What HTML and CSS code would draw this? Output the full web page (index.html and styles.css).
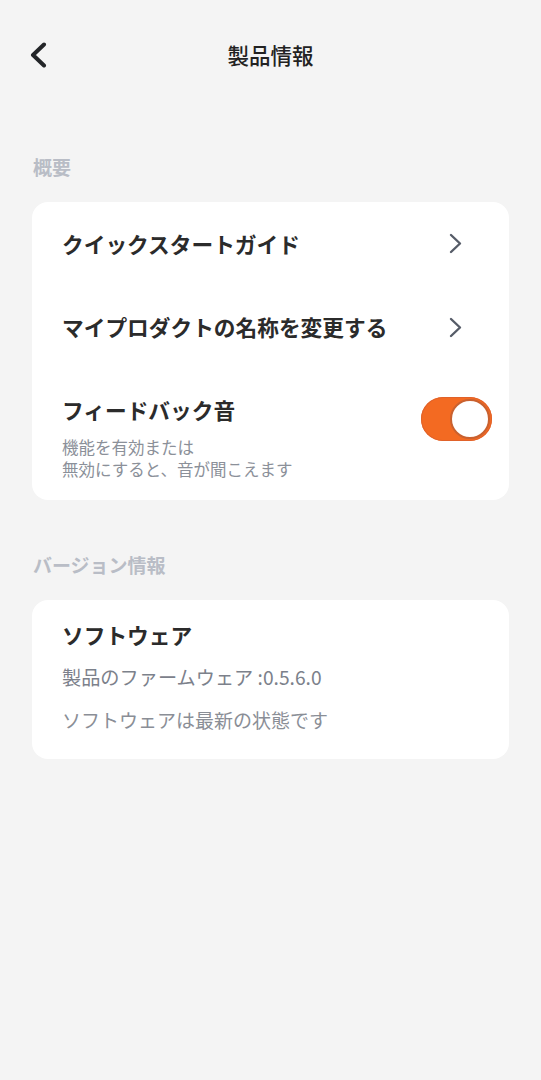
FILE: index.html
```html
<!DOCTYPE html>
<html lang="ja">
<head>
<meta charset="utf-8">
<title>製品情報</title>
<link rel="stylesheet" href="styles.css">
</head>
<body>
<header class="header">
  <div class="header-left">
    <svg class="back" width="18" height="26" viewBox="0 0 18 26"><path d="M15 2.5 L4 13 L15 23.5" fill="none" stroke="#232528" stroke-width="4" stroke-linecap="round" stroke-linejoin="round"/></svg>
  </div>
  <h1 class="title">製品情報</h1>
  <div class="header-right"></div>
</header>

<main class="content">
  <div class="section-label first">概要</div>
  <section class="card">
    <div class="row">
      <span class="row-title">クイックスタートガイド</span>
      <svg class="chev" width="13" height="21" viewBox="0 0 13 21"><path d="M2 2 L11 10.5 L2 19" fill="none" stroke="#565c68" stroke-width="2.4" stroke-linecap="round" stroke-linejoin="round"/></svg>
    </div>
    <div class="row">
      <span class="row-title">マイプロダクトの名称を変更する</span>
      <svg class="chev" width="13" height="21" viewBox="0 0 13 21"><path d="M2 2 L11 10.5 L2 19" fill="none" stroke="#565c68" stroke-width="2.4" stroke-linecap="round" stroke-linejoin="round"/></svg>
    </div>
    <div class="row-toggle">
      <div class="toggle-text">
        <div class="row-title">フィードバック音</div>
        <div class="sub">機能を有効または<br>無効にすると、音が聞こえます</div>
      </div>
      <div class="toggle"><span class="knob"></span></div>
    </div>
  </section>

  <div class="section-label second">バージョン情報</div>
  <section class="card card-version">
    <div class="row-title">ソフトウェア</div>
    <div class="firmware">製品のファームウェア :0.5.6.0</div>
    <div class="status">ソフトウェアは最新の状態です</div>
  </section>
</main>
</body>
</html>
```

FILE: styles.css
```css
* { box-sizing: border-box; }
html, body { margin: 0; padding: 0; }
body {
  background: #f4f4f4;
  font-family: "Noto Sans CJK JP", "Noto Sans", sans-serif;
  color: #2a2a2a;
  width: 541px;
  min-height: 1080px;
}
.header {
  height: 110px;
  display: grid;
  grid-template-columns: 1fr auto 1fr;
  align-items: center;
}
.header-left { padding-left: 29px; display: flex; align-items: center; }
.back { display: block; }
.title {
  margin: 0;
  font-size: 21.5px;
  font-weight: 500;
  color: #222;
  line-height: 30px;
}
.content { padding: 0 32px; }
.section-label {
  font-size: 19px;
  font-weight: 700;
  color: #b9bdc6;
  line-height: 26px;
  padding-left: 1px;
  margin-bottom: 22px;
}
.section-label.first { margin-top: 44px; }
.section-label.second { margin-top: 52px; }
.card {
  background: #fff;
  border-radius: 16px;
  padding: 0 17px 0 30px;
}
.row {
  height: 84px;
  display: flex;
  align-items: center;
  justify-content: space-between;
}
.row:first-child { height: 83px; }
.chev { display: block; margin-right: 30px; }
.row-title {
  font-size: 21.7px;
  font-weight: 700;
  color: #2b2b2b;
  line-height: 30px;
}
.row-toggle {
  display: flex;
  justify-content: space-between;
  align-items: flex-start;
  padding: 26px 0 20px;
}
.sub {
  margin-top: 11px;
  font-size: 16.5px;
  line-height: 22px;
  color: #8b9099;
}
.toggle {
  position: relative;
  width: 71px;
  height: 44px;
  border-radius: 22px;
  background: #f36a22;
  margin-top: 2px;
  box-shadow: inset 0 0 0 1px #e0622a;
}
.knob {
  position: absolute;
  right: 2px;
  top: 2px;
  width: 40px;
  height: 40px;
  border-radius: 50%;
  background: #fff;
  border: 2px solid #c9612f;
}
.card-version { padding: 20px 30px 26px; }
.firmware {
  margin-top: 14px;
  font-size: 19.2px;
  line-height: 26px;
  color: #7c818b;
}
.status {
  margin-top: 17px;
  font-size: 19px;
  line-height: 26px;
  color: #8a8e96;
}
```
